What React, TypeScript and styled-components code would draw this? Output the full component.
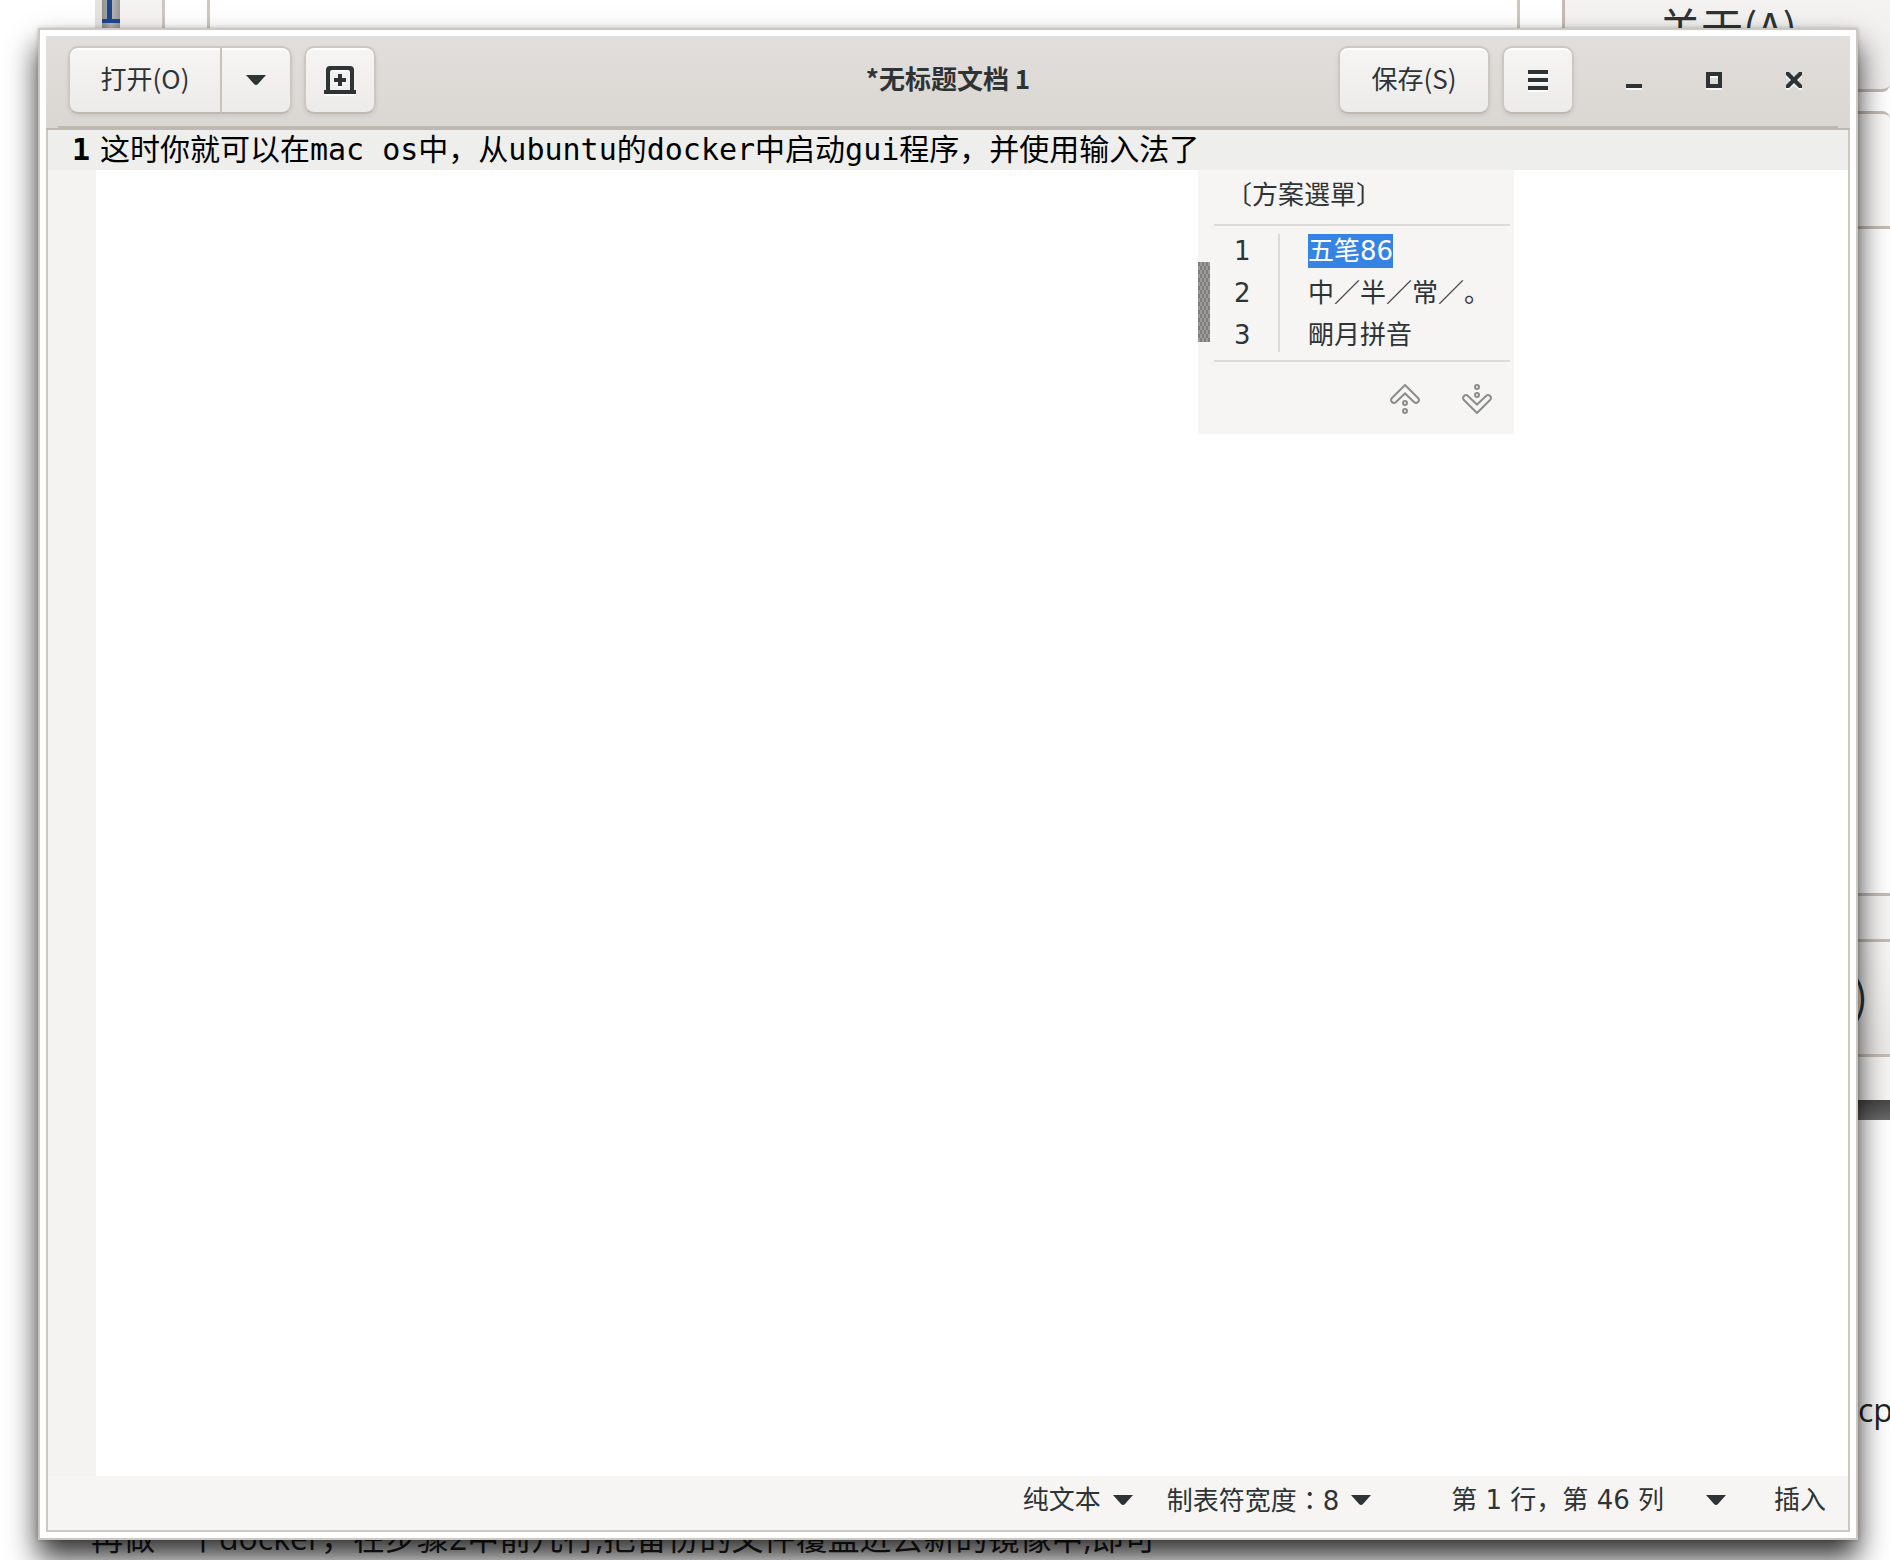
import React, { useState } from "react";
import styled, { createGlobalStyle } from "styled-components";

const ui = `"DejaVu Sans", "Noto Sans CJK SC", sans-serif`;
const cjk = `"Noto Sans CJK SC", sans-serif`;
const mono = `"DejaVu Sans Mono", "Noto Sans CJK SC", monospace`;
const ink = "#2e3436";
const edge = "#cdc7c2";

const GlobalStyle = createGlobalStyle`
  *, *::before, *::after { box-sizing: border-box; }
  body { margin: 0; background: #fff; color: ${ink}; font-family: ${ui}; }
  button { font: inherit; color: inherit; border: 0; padding: 0; margin: 0; background: none; }
`;

const Desktop = styled.div`
  position: relative;
  display: flex;
  min-height: 100vh;
  padding: 28px 32px 20px 38px;
  overflow: hidden;
`;

/* the application that lies behind the editor */
const BackWindow = styled.div`
  position: absolute;
  top: 0;
  left: 95px;
  right: 0;
  height: 1120px;
  display: flex;
  flex-direction: column;
`;
const BackRow = styled.div`
  flex: 1;
  display: flex;
`;
const BackStrip = styled.div`
  width: 7px;
  background: #e4e3e1;
`;
const BackNumber = styled.div`
  width: 18px;
  height: 28px;
  background: linear-gradient(90deg, #8f8f8f, #b8b8b8 50%, #989898);
`;
const BackGutter = styled.div`
  width: 45px;
  background: #f4f3f2;
  border-right: 3px solid ${edge};
`;
const BackDocument = styled.div`
  flex: 1;
  margin: 0 42px;
  border: solid ${edge};
  border-width: 0 3px;
`;
const BackSide = styled.div`
  width: 328px;
  display: flex;
  flex-direction: column;
`;
const SideAbout = styled.div`
  height: 92px;
  padding: 2px 0 0 94px;
  border: solid #c4bbb4;
  border-width: 0 0 3px 3px;
  border-bottom-right-radius: 8px;
  background: linear-gradient(#f4f3f2, #eeedeb);
  font: 42px/48px ${cjk};
`;
const SidePanel = styled.div`
  height: 118px;
  margin-top: 19px;
  border: 3px solid #c4bbb4;
  border-right: 0;
  border-top-right-radius: 8px;
  background: #f9f8f7;
`;
const SideDialog = styled.div`
  margin-top: auto;
  height: 207px;
  padding: 43px 0;
  border-top: 3px solid #c4bbb4;
  background: #f5f4f3;
`;
const SideButton = styled.div`
  height: 118px;
  display: flex;
  align-items: center;
  justify-content: flex-end;
  padding: 0 22px 6px 0;
  border: solid #c4bbb4;
  border-width: 3px 0;
  background: linear-gradient(#f7f6f5, #eae9e7);
  font: 42px/48px ${cjk};
`;
const BackShade = styled.div`
  height: 20px;
  background: linear-gradient(#454545, #6a6a6a);
`;
const PageText = styled.p<{ $left: number; $bottom: number }>`
  position: absolute;
  left: ${(p) => p.$left}px;
  bottom: ${(p) => p.$bottom}px;
  margin: 0;
  white-space: nowrap;
  color: #222;
  font: 32px/40px "Open Sans", "Noto Sans CJK SC", sans-serif;
`;

const Window = styled.main`
  position: relative;
  flex: 1;
  display: flex;
  flex-direction: column;
  padding: 6px;
  border: 2px solid ${edge};
  background: #fff;
  box-shadow: 0 18px 28px rgba(0, 0, 0, 0.8), 0 0 4px rgba(0, 0, 0, 0.2);
`;

const Header = styled.header`
  border-bottom: 2px solid #bfb8b1;
  background: linear-gradient(#e1dedb, #dad6d2);
`;
const HeaderRow = styled.div`
  display: grid;
  grid-template-columns: 1fr auto 1fr;
  align-items: center;
  padding: 10px 16px 12px 22px;
`;
const HeaderRule = styled.div`
  height: 2px;
  margin: 0 12px;
  background: #bfb8b1;
`;
const HeaderGroup = styled.div<{ $end?: boolean }>`
  display: flex;
  gap: 12px;
  justify-content: ${(p) => (p.$end ? "flex-end" : "flex-start")};
`;
const Title = styled.h1`
  margin: 0;
  padding: 0 6px 4px 0;
  font: 700 26px/36px ${cjk};
`;
const Linked = styled.div`
  display: flex;
`;
const ToolButton = styled.button<{ $w: number; $side?: "left" | "right" }>`
  display: flex;
  align-items: center;
  justify-content: center;
  width: ${(p) => p.$w}px;
  height: 68px;
  border: 2px solid ${edge};
  border-bottom-color: #bfb8b1;
  border-left-width: ${(p) => (p.$side === "right" ? 0 : 2)}px;
  border-radius: ${(p) =>
    p.$side === "left" ? "10px 0 0 10px" : p.$side === "right" ? "0 10px 10px 0" : "10px"};
  background: linear-gradient(#f6f5f4, #edebe9);
  box-shadow: inset 0 2px #fff, 0 2px 4px rgba(0, 0, 0, 0.07);
  font: 26px/36px ${cjk};
`;
const ButtonLabel = styled.span`
  padding-bottom: 4px;
`;
const WindowControls = styled.div`
  display: flex;
  margin-left: 8px;
`;
const ControlButton = styled.button`
  display: flex;
  align-items: center;
  justify-content: center;
  width: 80px;
  height: 68px;
`;
const Icon = styled.svg<{ $lit?: boolean }>`
  display: block;
  flex: none;
  fill: ${ink};
  filter: ${(p) => (p.$lit ? "drop-shadow(0 2px 0 rgba(255, 255, 255, 0.75))" : "none")};
`;

const Body = styled.div`
  flex: 1;
  display: flex;
  flex-direction: column;
  border: solid ${edge};
  border-width: 0 2px 2px;
`;
const Editor = styled.section`
  position: relative;
  flex: 1;
  display: flex;
`;
const Gutter = styled.div`
  width: 48px;
  padding-right: 6px;
  background: linear-gradient(#eeeeec 40px, #f4f3f2 40px);
  color: #000;
  text-align: right;
  font: 700 30px/40px ${mono};
`;
const TextArea = styled.textarea`
  flex: 1;
  min-width: 0;
  margin: 0;
  padding: 0 0 0 4px;
  border: 0;
  border-radius: 0;
  outline: 0;
  resize: none;
  overflow: hidden;
  background: linear-gradient(#eeeeec 40px, #fff 40px);
  color: #000;
  font: 30px/40px ${mono};
`;

const Candidates = styled.div`
  position: absolute;
  top: 40px;
  left: 1150px;
  width: 316px;
  height: 264px;
  display: flex;
  background: #f6f5f4;
`;
const Grip = styled.div`
  width: 12px;
  height: 80px;
  margin-top: 92px;
  background:
    conic-gradient(#9c9c9c 25%, transparent 0) 0 0 / 4px 8px,
    conic-gradient(#9c9c9c 25%, transparent 0) 2px 4px / 4px 8px,
    #7e7e7e;
`;
const CandidatePanel = styled.div`
  flex: 1;
  padding: 0 4px;
`;
const CandidateTitle = styled.div`
  height: 56px;
  padding-left: 12px;
  border-bottom: 2px solid #dddbd9;
  font: 26px/46px ${cjk};
`;
const CandidateList = styled.div`
  display: grid;
  grid-template-columns: 66px 1fr;
  padding: 8px 0;
  border-bottom: 2px solid #dddbd9;
`;
const CandidateKeys = styled.div`
  display: flex;
  flex-direction: column;
  gap: 8px;
  padding-left: 20px;
  border-right: 2px solid #dddbd9;
  font: 26px/34px ${ui};
`;
const CandidateWords = styled.div`
  display: flex;
  flex-direction: column;
  align-items: flex-start;
  gap: 8px;
  padding-left: 28px;
  font: 26px/34px ${ui};
`;
const Word = styled.button<{ $on: boolean }>`
  height: 34px;
  white-space: nowrap;
  background: ${(p) => (p.$on ? "#3584e4" : "transparent")};
  color: ${(p) => (p.$on ? "#fff" : ink)};
`;
const Pager = styled.div`
  display: flex;
  justify-content: flex-end;
  gap: 42px;
  padding: 22px 18px 0 0;
`;
const PagerIcon = styled.svg<{ $down?: boolean }>`
  display: block;
  fill: none;
  stroke: #8b8d8d;
  stroke-width: 2;
  transform: ${(p) => (p.$down ? "scaleY(-1)" : "none")};
`;

const StatusBar = styled.footer`
  display: flex;
  align-items: center;
  justify-content: flex-end;
  height: 54px;
  padding: 0 22px 6px 0;
  background: #f6f5f4;
  font: 26px/36px ${ui};
`;
const StatusButton = styled.button<{ $gap: number; $after: number }>`
  display: flex;
  align-items: center;
  gap: ${(p) => p.$gap}px;
  margin-right: ${(p) => p.$after}px;
  white-space: nowrap;
`;
const Colon = styled.span`
  font-family: "Noto Sans CJK TC", sans-serif;
`;

const Caret = () => (
  <Icon width="20" height="10" viewBox="0 0 20 10" aria-hidden="true">
    <path d="M0 0H20L12 9Q10 11 8 9Z" />
  </Icon>
);

const PageArrow = ({ down }: { down?: boolean }) => (
  <PagerIcon $down={down} width="30" height="30" viewBox="0 0 30 30" aria-hidden="true">
    <path d="M15 1L28 14Q30 16 28 18Q26 20 24 18L15 9.500L6 18Q4 20 2 18Q0 16 2 14Z" />
    <circle cx="15" cy="19" r="2" />
    <circle cx="15" cy="27" r="2" />
  </PagerIcon>
);

const words = ["五笔86", "中／半／常／。", "朙月拼音"];

export default function App() {
  const [text, setText] = useState(
    "这时你就可以在mac os中，从ubuntu的docker中启动gui程序，并使用输入法了"
  );
  const [selected, setSelected] = useState(0);

  return (
    <>
      <GlobalStyle />
      <Desktop lang="zh-CN">
        <BackWindow aria-hidden="true">
          <BackRow>
            <BackStrip />
            <BackNumber>
              <svg width="18" height="28" viewBox="0 0 18 28">
                <path d="M5 0H10V19H18V23H0V19H5Z" fill="#1f468c" />
              </svg>
            </BackNumber>
            <BackGutter />
            <BackDocument />
            <BackSide>
              <SideAbout>关于(A)</SideAbout>
              <SidePanel />
              <SideDialog>
                <SideButton>)</SideButton>
              </SideDialog>
            </BackSide>
          </BackRow>
          <BackShade />
        </BackWindow>
        <PageText $left={1858} $bottom={130}>cp</PageText>
        <PageText $left={91} $bottom={2}>
          再做一个docker，在步骤2中前几行,把备份的文件覆盖进去新的镜像中,即可
        </PageText>

        <Window>
          <Header>
            <HeaderRow>
              <HeaderGroup>
                <Linked>
                  <ToolButton $w={154} $side="left">
                    <ButtonLabel>打开(O)</ButtonLabel>
                  </ToolButton>
                  <ToolButton $w={70} $side="right" aria-label="最近的文件">
                    <Caret />
                  </ToolButton>
                </Linked>
                <ToolButton $w={72} aria-label="新建文档">
                  <Icon $lit width="32" height="28" viewBox="0 0 32 28" aria-hidden="true">
                    <path
                      fillRule="evenodd"
                      d="M2 24V4Q2 0 6 0H26Q30 0 30 4V24H32V28H0V24ZM6 24H26V6Q26 4 24 4H8Q6 4 6 6Z"
                    />
                    <path d="M14 8H18V12H22V16H18V20H14V16H10V12H14Z" />
                  </Icon>
                </ToolButton>
              </HeaderGroup>
              <Title>*无标题文档 1</Title>
              <HeaderGroup $end>
                <ToolButton $w={152}>
                  <ButtonLabel>保存(S)</ButtonLabel>
                </ToolButton>
                <ToolButton $w={72} aria-label="菜单">
                  <Icon $lit width="20" height="20" viewBox="0 0 20 20" aria-hidden="true">
                    <path d="M0 0H20V4H0ZM0 8H20V12H0ZM0 16H20V20H0Z" />
                  </Icon>
                </ToolButton>
                <WindowControls>
                  <ControlButton aria-label="最小化">
                    <Icon $lit width="16" height="16" viewBox="0 0 16 16" aria-hidden="true">
                      <path d="M0 12H16V16H0Z" />
                    </Icon>
                  </ControlButton>
                  <ControlButton aria-label="最大化">
                    <Icon $lit width="16" height="16" viewBox="0 0 16 16" aria-hidden="true">
                      <path fillRule="evenodd" d="M0 0H16V16H0ZM4 4V12H12V4Z" />
                    </Icon>
                  </ControlButton>
                  <ControlButton aria-label="关闭">
                    <Icon $lit width="16" height="16" viewBox="0 0 16 16" aria-hidden="true">
                      <path d="M0 0H3L8 5L13 0H16V3L11 8L16 13V16H13L8 11L3 16H0V13L5 8L0 3Z" />
                    </Icon>
                  </ControlButton>
                </WindowControls>
              </HeaderGroup>
            </HeaderRow>
            <HeaderRule />
          </Header>

          <Body>
            <Editor>
              <Gutter>1</Gutter>
              <TextArea
                aria-label="文档"
                spellCheck={false}
                value={text}
                onChange={(e) => setText(e.target.value)}
              />
              <Candidates>
                <Grip />
                <CandidatePanel>
                  <CandidateTitle>〔方案選單〕</CandidateTitle>
                  <CandidateList>
                    <CandidateKeys>
                      {words.map((w, i) => (
                        <span key={w}>{i + 1}</span>
                      ))}
                    </CandidateKeys>
                    <CandidateWords>
                      {words.map((w, i) => (
                        <Word key={w} $on={i === selected} onClick={() => setSelected(i)}>
                          {w}
                        </Word>
                      ))}
                    </CandidateWords>
                  </CandidateList>
                  <Pager>
                    <button aria-label="上一页">
                      <PageArrow />
                    </button>
                    <button aria-label="下一页">
                      <PageArrow down />
                    </button>
                  </Pager>
                </CandidatePanel>
              </Candidates>
            </Editor>
            <StatusBar>
              <StatusButton $gap={12} $after={34}>
                纯文本
                <Caret />
              </StatusButton>
              <StatusButton $gap={12} $after={80}>
                <span>
                  制表符宽度<Colon lang="zh-TW">：</Colon>8
                </span>
                <Caret />
              </StatusButton>
              <StatusButton $gap={42} $after={48}>
                <span>第 1 行，第 46 列</span>
                <Caret />
              </StatusButton>
              <span>插入</span>
            </StatusBar>
          </Body>
        </Window>
      </Desktop>
    </>
  );
}
